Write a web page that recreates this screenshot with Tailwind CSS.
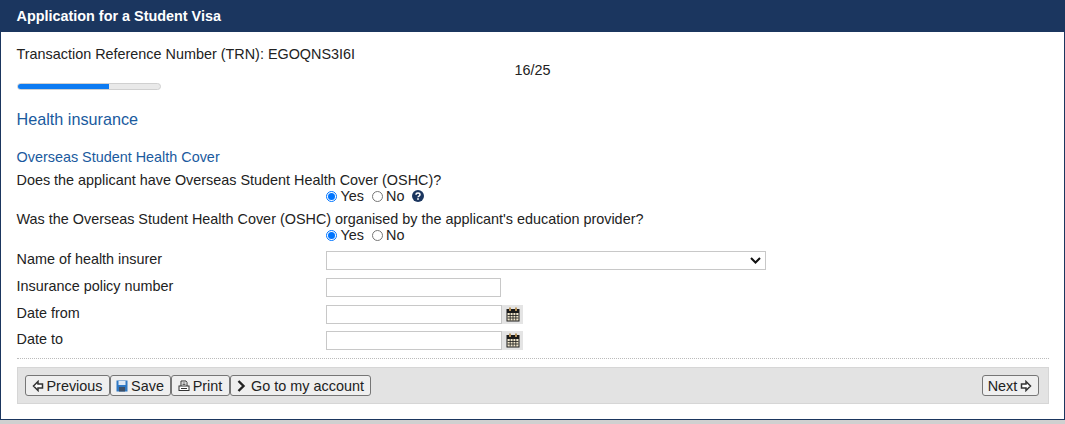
<!DOCTYPE html>
<html lang="en">
  <head>
    <meta charset="UTF-8" />
    <title>Application for a Student Visa</title>
    <script src="https://cdn.jsdelivr.net/npm/@tailwindcss/browser@4"></script>
  </head>
  <body class="bg-[#d0d0d0] font-['Liberation_Sans',Arial,sans-serif] text-[14.4px] leading-[16px] text-[#222] h-[424px] overflow-hidden">
    <div class="w-[1064.5px] h-[420px] bg-white border-x-[1.5px] border-b-[1.5px] border-[#1b365f] flex flex-col">
      <!-- Title -->
      <div class="h-[32px] shrink-0 bg-[#1b365f] text-white font-bold pl-[15.5px] pt-[8px]">Application for a Student Visa</div>

      <div class="pl-[15.5px] pr-[15px] flex-1 flex flex-col">
        <!-- TRN -->
        <div class="pt-[14px] h-[30px]">Transaction Reference Number (TRN): EGOQNS3I6I</div>
        <div class="text-center h-[21px]">16/25</div>
        <div class="w-[144px] h-[7px] rounded-full bg-[#e9e9e9] border border-[#d0d0d0] overflow-hidden">
          <div class="w-[91px] h-full bg-[#0d7bf2]"></div>
        </div>

        <h2 class="text-[16.2px] leading-[18px] text-[#1a5a9e] mt-[20px]">Health insurance</h2>
        <h3 class="text-[#1a5a9e] mt-[21px]">Overseas Student Health Cover</h3>

        <!-- Questions -->
        <div class="mt-[7px]">Does the applicant have Overseas Student Health Cover (OSHC)?</div>
        <div class="flex items-center h-[16px] pl-[309px]">
          <span class="w-[11px] h-[11px] rounded-full border border-[#0075ff] flex items-center justify-center mr-[4px]"><span class="w-[7px] h-[7px] rounded-full bg-[#0075ff]"></span></span>
          <span class="mr-[8px]">Yes</span>
          <span class="w-[11px] h-[11px] rounded-full border border-[#767676] mr-[3px]"></span>
          <span>No</span>
          <svg class="ml-[8px]" width="12" height="12" viewBox="0 0 12 12"><circle cx="6" cy="6" r="6" fill="#1b365f"/><path d="M4 4.700C4 3.600 4.900 3 6 3s2 .7 2 1.700c0 1.400-2 1.300-2 2.600" fill="none" stroke="#fff" stroke-width="1.500"/><rect x="5.200" y="8.200" width="1.600" height="1.600" fill="#fff"/></svg>
        </div>

        <div class="mt-[7px]">Was the Overseas Student Health Cover (OSHC) organised by the applicant's education provider?</div>
        <div class="flex items-center h-[16px] pl-[309px]">
          <span class="w-[11px] h-[11px] rounded-full border border-[#0075ff] flex items-center justify-center mr-[4px]"><span class="w-[7px] h-[7px] rounded-full bg-[#0075ff]"></span></span>
          <span class="mr-[8px]">Yes</span>
          <span class="w-[11px] h-[11px] rounded-full border border-[#767676] mr-[3px]"></span>
          <span>No</span>
        </div>

        <!-- Fields -->
        <div class="flex items-center h-[19px] mt-[8px]">
          <label class="w-[309px] -mt-[3px]">Name of health insurer</label>
          <div class="w-[440px] h-[19px] border border-[#c8c8c8] flex items-center justify-end pr-[4px]">
            <svg width="11" height="7" viewBox="0 0 11 7"><path d="M1 1l4.500 4.500L10 1" fill="none" stroke="#111" stroke-width="2"/></svg>
          </div>
        </div>
        <div class="flex items-center h-[19px] mt-[8px]">
          <label class="w-[309px] -mt-[3px]">Insurance policy number</label>
          <div class="w-[175px] h-[19px] border border-[#c8c8c8]"></div>
        </div>
        <div class="flex items-center h-[19px] mt-[8px]">
          <label class="w-[309px] -mt-[3px]">Date from</label>
          <div class="w-[176px] h-[19px] border border-[#c8c8c8]"></div>
          <div class="w-[21px] h-[19px] bg-[#e4e4e4] flex items-center justify-center pl-[1px]">
            <svg width="14" height="15" viewBox="0 0 14 15"><rect x="0.500" y="2" width="13" height="12.500" fill="#1a1a1a"/><rect x="1.500" y="6" width="11" height="7.500" fill="#f0e6cc"/><path d="M1.500 8.500h11M1.500 11h11M4.200 6v7.500M7 6v7.500M9.800 6v7.500" stroke="#1a1a1a" stroke-width=".8"/><rect x="3" y="0.500" width="2" height="3.500" fill="#b8935a"/><rect x="9" y="0.500" width="2" height="3.500" fill="#b8935a"/></svg>
          </div>
        </div>
        <div class="flex items-center h-[19px] mt-[7px]">
          <label class="w-[309px] -mt-[3px]">Date to</label>
          <div class="w-[176px] h-[19px] border border-[#c8c8c8]"></div>
          <div class="w-[21px] h-[19px] bg-[#e4e4e4] flex items-center justify-center pl-[1px]">
            <svg width="14" height="15" viewBox="0 0 14 15"><rect x="0.500" y="2" width="13" height="12.500" fill="#1a1a1a"/><rect x="1.500" y="6" width="11" height="7.500" fill="#f0e6cc"/><path d="M1.500 8.500h11M1.500 11h11M4.200 6v7.500M7 6v7.500M9.800 6v7.500" stroke="#1a1a1a" stroke-width=".8"/><rect x="3" y="0.500" width="2" height="3.500" fill="#b8935a"/><rect x="9" y="0.500" width="2" height="3.500" fill="#b8935a"/></svg>
          </div>
        </div>

        <!-- Actions -->
        <div class="border-t border-dotted border-[#bbb] mt-[8px] pt-[8px]">
          <div class="h-[37px] bg-[#e3e3e3] border border-[#d6d6d6] flex items-center justify-between pl-[7px] pr-[9px]">
            <div class="flex">
              <button class="h-[21px] w-[85px] flex items-center justify-center gap-[3px] bg-[#efefef] border border-[#767676] rounded-[3px]">
                <svg width="12" height="12" viewBox="0 0 12 12"><path d="M6 1.500L1.500 6 6 10.500V8h4.500V4H6z" fill="#fff" stroke="#333" stroke-width="1.500"/></svg>Previous</button>
              <button class="h-[21px] w-[61px] flex items-center justify-center gap-[3px] bg-[#efefef] border border-[#767676] rounded-[3px]">
                <svg width="12" height="12" viewBox="0 0 12 12"><rect x="0.500" y="0.500" width="11" height="11" fill="#2f78c4"/><rect x="2.500" y="1" width="7" height="4" fill="#dfe9f5"/><rect x="3" y="7" width="6" height="4.500" fill="#3d4f66"/></svg>Save</button>
              <button class="h-[21px] w-[59px] flex items-center justify-center gap-[3px] bg-[#efefef] border border-[#767676] rounded-[3px]">
                <svg width="12" height="12" viewBox="0 0 12 12"><path d="M3 6V1h5l1 1.500V6" fill="#fff" stroke="#333"/><path d="M4.500 3h3M4.500 4.500h3" stroke="#333" stroke-width=".8"/><rect x="1" y="6" width="10" height="4.500" fill="#fff" stroke="#333"/><path d="M3 8.500h6" stroke="#333"/></svg>Print</button>
              <button class="h-[21px] w-[141px] flex items-center justify-center gap-[5px] pl-[1px] bg-[#efefef] border border-[#767676] rounded-[3px]">
                <svg width="9" height="12" viewBox="0 0 9 12"><path d="M1.500 1l5 5-5 5" fill="none" stroke="#222" stroke-width="2.400"/></svg>Go to my account</button>
            </div>
            <button class="h-[21px] w-[57px] flex items-center justify-center gap-[3px] bg-[#efefef] border border-[#767676] rounded-[3px]">Next
              <svg width="12" height="12" viewBox="0 0 12 12"><path d="M6 1.500L10.500 6 6 10.500V8H1.500V4H6z" fill="#fff" stroke="#333" stroke-width="1.500"/></svg></button>
          </div>
        </div>
      </div>
    </div>
  </body>
</html>
